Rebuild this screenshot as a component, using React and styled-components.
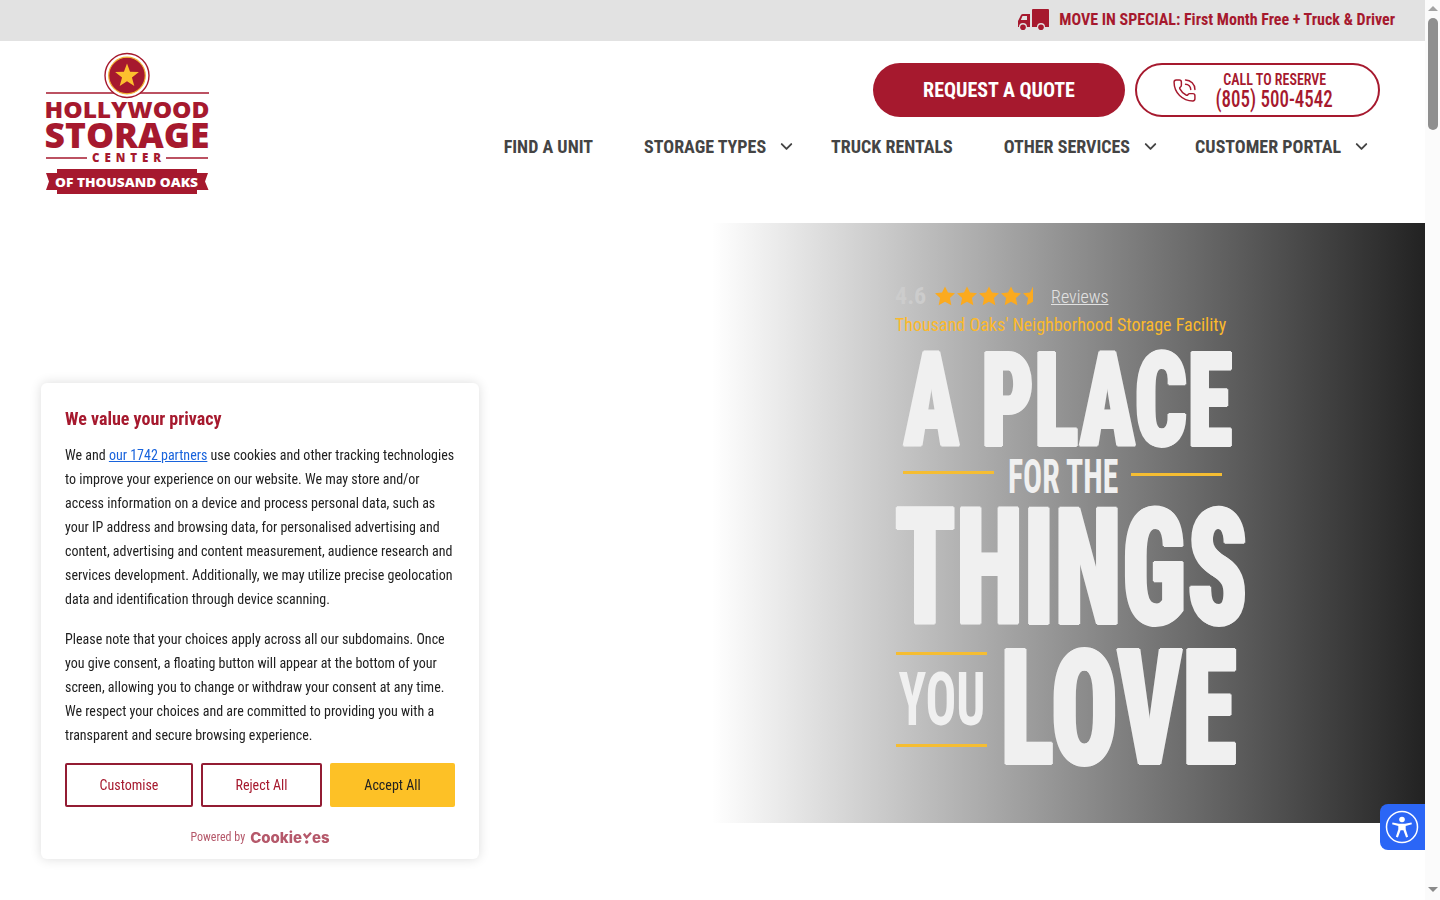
import React from 'react';
import styled, {createGlobalStyle} from 'styled-components';
import {ChevronDown, PhoneCall} from 'lucide-react';

const red = '#a6192e';
const yellow = '#fdc126';
const condensed = `"Roboto", "Liberation Sans", sans-serif`;

const GlobalStyle = createGlobalStyle`
  body {
    margin: 0;
    background: #fff;
    font-family: ${condensed};
    font-stretch: 75%;
  }
`;

const Logo = () => (
    <LogoSvg width="170" height="150" viewBox="0 0 170 150">
        <line x1="3" y1="43" x2="166" y2="43" stroke={red} strokeWidth="1.6"/>
        <circle cx="84" cy="25.500" r="22" fill="#fff" stroke={red} strokeWidth="1.4"/>
        <circle cx="84" cy="25.500" r="18.300" fill={red} stroke="#f2b233" strokeWidth="1.2"/>
        <polygon fill="#fcc02e"
                 points="84,13.500 87.060,21.790 95.900,22.100 88.950,27.610 91.300,36.100 84,31.200 76.700,36.100 79.050,27.610 72.100,22.100 80.940,21.790"/>
        <text x="1.500" y="68" textLength="165" lengthAdjust="spacingAndGlyphs" fill={red}
              fontFamily="Open Sans" fontWeight="800" fontSize="22.500">HOLLYWOOD</text>
        <text x="1.500" y="98" textLength="165" lengthAdjust="spacingAndGlyphs" fill={red}
              fontFamily="Open Sans" fontWeight="800" fontSize="35">STORAGE</text>
        <line x1="3" y1="108" x2="44" y2="108" stroke={red} strokeWidth="1.6"/>
        <line x1="123" y1="108" x2="165" y2="108" stroke={red} strokeWidth="1.6"/>
        <text x="49" y="112" textLength="69" fill={red}
              fontFamily="Open Sans" fontWeight="800" fontSize="11.500">CENTER</text>
        <path fill={red} d="M14 119H154V123H165L162 131.500L165.500 140H154V144H14V140H3L6 131.500L3 123H14Z"/>
        <text x="12" y="137" textLength="143" lengthAdjust="spacingAndGlyphs" fill="#fff"
              fontFamily="Open Sans" fontWeight="800" fontSize="12.500">OF THOUSAND OAKS</text>
    </LogoSvg>
);

const TruckIcon = () => (
    <svg width="32" height="22" viewBox="0 0 32 22">
        <path fill={red} d="M15 1q0-1 1-1h15q1 0 1 1v17H28a4 4 0 0 0-8 0h-5z"/>
        <path fill={red} d="M13 5v13h-3a4 4 0 0 0-8 0H1v-6l3-6q.5-1 2-1zM5.500 7 3.800 11H10V7z" fillRule="evenodd"/>
        <circle cx="6" cy="18.300" r="2.800" fill={red}/>
        <circle cx="24" cy="18.300" r="2.800" fill={red}/>
    </svg>
);

const Star = ({half}) => (
    <svg width="20" height="20" viewBox="0 0 24 24">
        <polygon fill="#fbaa1f"
                 points={half ? '12,.5 12,18.800 4.400,23 6.100,14.500 0,8.800 8.400,7.900' : '12,.5 15.600,7.900 24,8.800 17.900,14.500 19.600,23 12,18.800 4.400,23 6.100,14.500 0,8.800 8.400,7.900'}/>
    </svg>
);

const AccessIcon = () => (
    <svg width="36" height="36" viewBox="0 0 36 36">
        <circle cx="18" cy="18" r="15.500" fill="none" stroke="#fff" strokeWidth="1.500"/>
        <circle cx="18" cy="10.500" r="2.800" fill="#fff"/>
        <path fill="#fff" d="M8.500 13.500l6.500 1.200h6l6.500-1.200.4 1.800-6.200 1.600v3.400l2.400 7.400-2 .7-2.700-7.200h-2.800l-2.700 7.200-2-.7 2.400-7.400v-3.400L8.100 15.300z"/>
    </svg>
);

const CookieTick = () => (
    <svg width="9" height="12" viewBox="0 0 9 12">
        <path fill="none" stroke="#b5586a" strokeWidth="2.400" d="M.8 1.800 3.600 5.500 8 .8"/>
        <circle cx="3.700" cy="10" r="1.700" fill="#b5586a"/>
    </svg>
);

const App = () => {
    return (
        <Shell>
            <GlobalStyle/>
            <Page>
                <TopBar>
                    <TruckIcon/>
                    <Special>MOVE IN SPECIAL: First Month Free + Truck &amp; Driver</Special>
                </TopBar>
                <Header>
                    <Logo/>
                    <HeaderRight>
                        <Actions>
                            <QuoteButton>REQUEST A QUOTE</QuoteButton>
                            <CallButton>
                                <PhoneCall size={25} strokeWidth={1.4} color={red}/>
                                <CallText>
                                    <CallLabel>CALL TO RESERVE</CallLabel>
                                    <CallNumber>(805) 500-4542</CallNumber>
                                </CallText>
                            </CallButton>
                        </Actions>
                        <Nav>
                            <NavItem>FIND A UNIT</NavItem>
                            <NavItem $caret>STORAGE TYPES<ChevronDown size={19} strokeWidth={2.4}/></NavItem>
                            <NavItem>TRUCK RENTALS</NavItem>
                            <NavItem $caret>OTHER SERVICES<ChevronDown size={19} strokeWidth={2.4}/></NavItem>
                            <NavItem $caret>CUSTOMER PORTAL<ChevronDown size={19} strokeWidth={2.4}/></NavItem>
                        </Nav>
                    </HeaderRight>
                </Header>
                <Hero>
                    <HeroPanel>
                        <RatingRow>
                            <Score>4.6</Score>
                            <Stars>
                                <Star/><Star/><Star/><Star/><Star half/>
                            </Stars>
                            <ReviewLink>Reviews</ReviewLink>
                        </RatingRow>
                        <Tagline>Thousand Oaks' Neighborhood Storage Facility</Tagline>
                        <Headline>
                            <BigLine $size={132} $scale={0.686} $height={124} $width={335} $left={9}>A PLACE</BigLine>
                            <RuleLine>
                                <Rule $lift={10}/>
                                <SmallWord>FOR THE</SmallWord>
                                <Rule $lift={6}/>
                            </RuleLine>
                            <BigLine $size={163} $scale={0.667} $height={151} $width={353}>THINGS</BigLine>
                            <LoveRow>
                                <YouBlock>
                                    <Rule/>
                                    <YouWord>YOU</YouWord>
                                    <Rule/>
                                </YouBlock>
                                <BigLine $size={161} $scale={0.683} $height={135} $width={240}>LOVE</BigLine>
                            </LoveRow>
                        </Headline>
                    </HeroPanel>
                </Hero>
            </Page>
            <Scrollbar>
                <ArrowUp/>
                <Thumb/>
                <ArrowDown/>
            </Scrollbar>
            <CookieCard>
                <CookieTitle>We value your privacy</CookieTitle>
                <CookieText>
                    We and <PartnerLink>our 1742 partners</PartnerLink> use cookies and other tracking technologies to improve your experience on our website. We may store and/or access information on a device and process personal data, such as your IP address and browsing data, for personalised advertising and content, advertising and content measurement, audience research and services development. Additionally, we may utilize precise geolocation data and identification through device scanning.
                </CookieText>
                <CookieText>
                    Please note that your choices apply across all our subdomains. Once you give consent, a floating button will appear at the bottom of your screen, allowing you to change or withdraw your consent at any time. We respect your choices and are committed to providing you with a transparent and secure browsing experience.
                </CookieText>
                <CookieButtons>
                    <OutlineButton $width={128}>Customise</OutlineButton>
                    <OutlineButton $width={121}>Reject All</OutlineButton>
                    <AcceptButton>Accept All</AcceptButton>
                </CookieButtons>
                <PoweredBy>Powered by <BrandMark>Cookie<CookieTick/>es</BrandMark></PoweredBy>
            </CookieCard>
            <AccessButton><AccessIcon/></AccessButton>
        </Shell>
    )
}

const Shell = styled.div`
  display: flex;
  height: 100vh;
  overflow: hidden;
`;

const Page = styled.div`
  flex: 1;
  min-width: 0;
`;

const LogoSvg = styled.svg`
  font-stretch: normal;
`;

const Scrollbar = styled.div`
  display: flex;
  flex-direction: column;
  align-items: center;
  width: 15px;
  padding: 6px 0 8px;
  box-sizing: border-box;
  background: #fbfbfb;
`;

const ArrowUp = styled.div`
  border-left: 5px solid transparent;
  border-right: 5px solid transparent;
  border-bottom: 5px solid #a3a3a3;
`;

const ArrowDown = styled.div`
  margin-top: auto;
  border-left: 5px solid transparent;
  border-right: 5px solid transparent;
  border-top: 5px solid #8a8a8a;
`;

const Thumb = styled.div`
  width: 10px;
  height: 112px;
  margin-top: 7px;
  border-radius: 5px;
  background: #8f8f8f;
`;

const TopBar = styled.div`
  display: flex;
  align-items: center;
  justify-content: flex-end;
  gap: 10px;
  height: 41px;
  padding: 0 30px 2px 0;
  box-sizing: border-box;
  background: #e2e2e2;
`;

const Special = styled.div`
  font-size: 16px;
  font-weight: 700;
  color: ${red};
`;

const Header = styled.header`
  display: flex;
  justify-content: space-between;
  height: 182px;
  padding: 9px 45px 0 43px;
  box-sizing: border-box;
`;

const HeaderRight = styled.div`
  display: flex;
  flex-direction: column;
  align-items: flex-end;
  padding-top: 13px;
`;

const Actions = styled.div`
  display: flex;
  gap: 10px;
`;

const QuoteButton = styled.a`
  display: flex;
  align-items: center;
  justify-content: center;
  width: 252px;
  height: 54px;
  border-radius: 27px;
  background: ${red};
  color: #fff;
  font-size: 20px;
  font-weight: 700;
`;

const CallButton = styled.a`
  display: flex;
  align-items: center;
  gap: 19px;
  width: 245px;
  height: 54px;
  padding-left: 35px;
  box-sizing: border-box;
  border: 2px solid ${red};
  border-radius: 27px;
`;

const CallText = styled.div`
  display: flex;
  flex-direction: column;
  align-items: center;
  width: 117px;
  color: ${red};
`;

const CallLabel = styled.span`
  font-size: 16px;
  font-weight: 600;
  line-height: 18px;
  white-space: nowrap;
  transform: scaleX(.875);
`;

const CallNumber = styled.span`
  font-size: 24px;
  font-weight: 500;
  line-height: 21px;
  white-space: nowrap;
  transform: scaleX(.79);
`;

const Nav = styled.nav`
  display: flex;
  margin-top: 16px;
`;

const NavItem = styled.a`
  display: flex;
  align-items: center;
  gap: 11px;
  height: 26px;
  margin-right: ${p => p.$caret ? 35 : 51}px;
  font-size: 18px;
  font-weight: 700;
  color: #444;

  &:last-child {
    margin-right: 9px;
  }
`;

const Hero = styled.section`
  display: flex;
  justify-content: flex-end;
  height: 600px;
`;

const HeroPanel = styled.div`
  width: 713px;
  box-sizing: border-box;
  padding: 59px 0 0 183px;
  background: linear-gradient(to right, rgba(34, 34, 34, 0), #222);
  overflow: hidden;
`;

const RatingRow = styled.div`
  display: flex;
  align-items: center;
  height: 28px;
`;

const Score = styled.span`
  width: 40px;
  font-size: 24px;
  font-weight: 700;
  color: #cccccc;
`;

const Stars = styled.span`
  display: flex;
  gap: 2px;

  svg:last-child {
    margin-left: 0;
  }
`;

const ReviewLink = styled.a`
  margin-left: 8px;
  font-size: 18px;
  font-weight: 300;
  color: #e2e2e2;
  text-decoration: underline;
`;

const Tagline = styled.div`
  margin-top: 1px;
  font-size: 18px;
  line-height: 28px;
  color: #fbb92c;
`;

const Headline = styled.h1`
  margin: 0;
  color: #f0f0f0;
  font-weight: 900;
`;

const BigLine = styled.div`
  width: ${p => p.$width}px;
  margin-left: ${p => p.$left || 0}px;
  font-size: ${p => p.$size}px;
  line-height: ${p => p.$height}px;
  letter-spacing: 1.5px;
  white-space: nowrap;
  -webkit-text-stroke: 2px #f0f0f0;
  text-shadow: 2.5px 0 #f0f0f0, -2.5px 0 #f0f0f0;
  transform: scaleX(${p => p.$scale});
  transform-origin: left center;
`;

const RuleLine = styled.div`
  display: flex;
  align-items: center;
  gap: 14px;
  height: 32px;
  margin: -2px 0 0;
  padding-left: 8px;
`;

const Rule = styled.div`
  flex: none;
  width: 91px;
  height: 3px;
  margin-bottom: ${p => p.$lift || 0}px;
  background: #f5bd32;
`;

const SmallWord = styled.span`
  width: 109px;
  font-size: 48px;
  font-weight: 700;
  line-height: 32px;
  white-space: nowrap;
  transform: scaleX(.66);
  transform-origin: left center;
`;

const LoveRow = styled.div`
  display: flex;
  gap: 14px;
  height: 133px;
  margin-top: -2px;
`;

const YouBlock = styled.div`
  display: flex;
  flex-direction: column;
  align-items: center;
  flex: none;
  width: 91px;
  margin-left: 1px;
  padding-top: 10px;
`;

const YouWord = styled.span`
  font-size: 74px;
  font-weight: 700;
  line-height: 89px;
  white-space: nowrap;
  transform: scaleX(.69);
`;

const CookieCard = styled.div`
  position: fixed;
  left: 41px;
  top: 383px;
  width: 438px;
  height: 476px;
  box-sizing: border-box;
  padding: 24px;
  background: #fff;
  border-radius: 6px;
  box-shadow: 0 0 12px rgba(0, 0, 0, .14);
`;

const CookieTitle = styled.div`
  font-size: 18px;
  font-weight: 700;
  line-height: 24px;
  color: ${red};
`;

const CookieText = styled.p`
  margin: 12px 0 16px;
  font-size: 14px;
  line-height: 24px;
  color: #212121;
`;

const PartnerLink = styled.a`
  color: #1863dc;
  text-decoration: underline;
`;

const CookieButtons = styled.div`
  display: flex;
  gap: 8px;
`;

const OutlineButton = styled.button`
  width: ${p => p.$width}px;
  height: 44px;
  background: #fff;
  border: 2px solid #931c33;
  border-radius: 2px;
  color: ${red};
  font: inherit;
  font-size: 14px;
`;

const AcceptButton = styled.button`
  flex: 1;
  height: 44px;
  background: ${yellow};
  border: 0;
  border-radius: 2px;
  color: #212121;
  font: inherit;
  font-size: 14px;
`;

const PoweredBy = styled.div`
  display: flex;
  justify-content: center;
  gap: 5px;
  margin-top: 20px;
  font-size: 12px;
  line-height: 20px;
  color: #b5586a;
`;

const BrandMark = styled.span`
  display: flex;
  align-items: center;
  margin-top: 1px;
  font-family: "Inter", sans-serif;
  font-size: 15px;
  font-weight: 800;
  font-stretch: normal;

  svg {
    margin: 0 0 0 1px;
  }
`;

const AccessButton = styled.div`
  position: fixed;
  right: 15px;
  top: 804px;
  display: flex;
  align-items: center;
  justify-content: center;
  width: 45px;
  height: 46px;
  padding-right: 1px;
  box-sizing: border-box;
  background: #2b66f6;
  border-radius: 8px 0 0 8px;
`;

export default App;
